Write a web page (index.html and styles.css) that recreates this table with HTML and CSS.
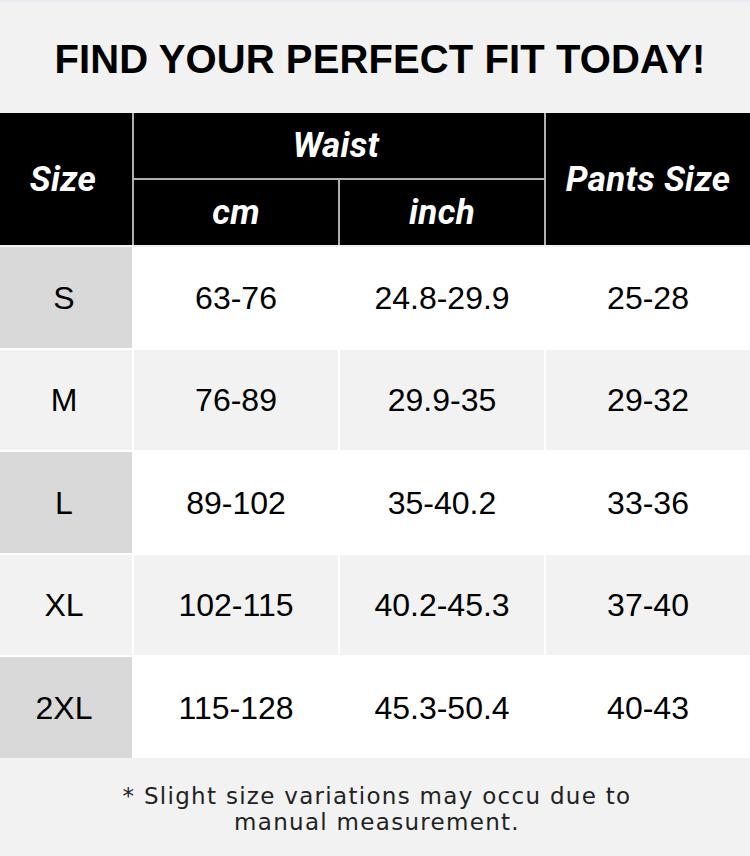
FILE: index.html
```html
<!DOCTYPE html>
<html>
<head>
<meta charset="utf-8">
<link rel="stylesheet" href="styles.css">
</head>
<body>
<div class="page">
  <div class="title-bar">
    <h1 class="title">FIND YOUR PERFECT FIT TODAY!</h1>
  </div>
  <div class="head-grid">
    <div class="hcell size-h">Size</div>
    <div class="hcell waist-h">Waist</div>
    <div class="hcell pants-h">Pants Size</div>
    <div class="hcell">cm</div>
    <div class="hcell">inch</div>
  </div>
  <div class="body-grid">
    <div class="cell size-odd">S</div><div class="cell odd">63-76</div><div class="cell odd">24.8-29.9</div><div class="cell odd">25-28</div>
    <div class="cell size-even">M</div><div class="cell even">76-89</div><div class="cell even">29.9-35</div><div class="cell even">29-32</div>
    <div class="cell size-odd">L</div><div class="cell odd">89-102</div><div class="cell odd">35-40.2</div><div class="cell odd">33-36</div>
    <div class="cell size-even">XL</div><div class="cell even">102-115</div><div class="cell even">40.2-45.3</div><div class="cell even">37-40</div>
    <div class="cell size-odd">2XL</div><div class="cell odd">115-128</div><div class="cell odd">45.3-50.4</div><div class="cell odd">40-43</div>
  </div>
  <div class="footer">
    <p class="note">* Slight size variations may occu due to<br>manual measurement.</p>
  </div>
</div>
</body>
</html>
```
FILE: styles.css
```css
html, body {
  margin: 0;
  padding: 0;
  background: #f2f2f2;
}
.page {
  width: 750px;
  height: 856px;
  background: #f2f2f2;
  border-top: 2px solid #e7ecf3;
  box-sizing: border-box;
  display: flex;
  flex-direction: column;
}
.title-bar {
  height: 111px;
  display: flex;
  align-items: center;
  justify-content: center;
  padding-left: 10px;
}
.title {
  margin: 0;
  padding-top: 4px;
  font-family: "Liberation Sans", Arial, sans-serif;
  font-weight: bold;
  font-size: 40px;
  color: #000;
  letter-spacing: 0.1px;
}
.head-grid {
  display: grid;
  grid-template-columns: 132px 204px 204px 204px;
  grid-template-rows: 65px 65px;
  gap: 2px;
  background: #b0b0b0;
  height: 132px;
}
.hcell {
  background: #000;
  color: #fff;
  font-family: Roboto, "Liberation Sans", sans-serif;
  font-weight: bold;
  font-style: italic;
  font-size: 35px;
  letter-spacing: 0.3px;
  display: flex;
  align-items: center;
  justify-content: center;
}
.size-h {
  grid-row: 1 / 3;
  padding-right: 6px;
}
.waist-h {
  grid-column: 2 / 4;
  padding-right: 6px;
}
.pants-h {
  grid-column: 4;
  grid-row: 1 / 3;
}
.body-grid {
  margin-top: 2px;
  display: grid;
  grid-template-columns: 132px 204px 204px 204px;
  grid-template-rows: repeat(5, 100.5px);
  gap: 2px;
  background: #fff;
}
.cell {
  display: flex;
  align-items: center;
  justify-content: center;
  padding-top: 2px;
  font-family: "Liberation Sans", Arial, sans-serif;
  font-size: 32px;
  color: #000;
}
.size-odd {
  background: #d9d9d9;
  padding-right: 4px;
}
.size-even {
  background: #f2f2f2;
  padding-right: 4px;
}
.odd {
  background: #fff;
}
.even {
  background: #f2f2f2;
}
.footer {
  flex: 1;
  display: flex;
  align-items: center;
  justify-content: center;
  background: #f2f2f2;
  padding-left: 4px;
}
.note {
  margin: 4px 0 0 0;
  text-align: center;
  font-family: "DejaVu Sans", sans-serif;
  font-size: 23px;
  line-height: 26px;
  letter-spacing: 1.3px;
  color: #222;
}
```
